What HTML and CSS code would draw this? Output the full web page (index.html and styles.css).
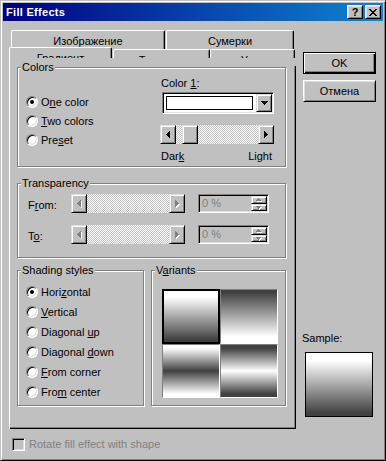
FILE: index.html
```html
<!DOCTYPE html>
<html lang="ru">
<head>
	<meta charset="UTF-8">
	<title>Fill Effects</title>
	<link rel="stylesheet" href="styles.css">
</head>
<body>
	<div class="window">
		<div class="titlebar">
			<span class="title">Fill Effects</span>
			<span class="tbtn raised">?</span>
			<span class="tbtn raised">
				<svg width="8" height="7"><path d="M0 0h2v1H0zM6 0h2v1H6zM1 1h2v1H1zM5 1h2v1H5zM2 2h4v1H2zM3 3h2v1H3zM2 4h4v1H2zM1 5h2v1H1zM5 5h2v1H5zM0 6h2v1H0zM6 6h2v1H6z"/></svg>
			</span>
		</div>
		<div class="client">
			<div class="main">
				<!-- вкладки -->
				<div class="tabs-back">
					<div class="tab t-img">Изображение</div>
					<div class="tab t-dusk">Сумерки</div>
				</div>
				<div class="tabs-front">
					<div class="tab t-grad sel">Градиент</div>
					<div class="tab t-tex">Текстура</div>
					<div class="tab t-pat">Узор</div>
				</div>
				<div class="panel">
					<div class="panel-body">
						<!-- Colors -->
						<div class="group g-colors">
							<span class="cap">Colors</span>
							<div class="colors-row">
								<div class="radios">
									<div class="radio"><span class="rb on"></span><span>O<u>n</u>e color</span></div>
									<div class="radio"><span class="rb"></span><span><u>T</u>wo colors</span></div>
									<div class="radio"><span class="rb"></span><span>Pre<u>s</u>et</span></div>
								</div>
								<div class="pick">
									<div class="lbl">Color <u>1</u>:</div>
									<div class="combo">
										<span class="swatch"></span>
										<span class="drop raised">
											<svg width="7" height="4"><path d="M0 0h7v1H0zM1 1h5v1H1zM2 2h3v1H2zM3 3h1v1H3z"/></svg>
										</span>
									</div>
									<div class="scroll">
										<span class="sbtn raised"><svg width="4" height="7"><path d="M0 3h1v1H0zM1 2h1v3H1zM2 1h1v5H2zM3 0h1v7H3z"/></svg></span>
										<span class="track"><span class="thumb raised"></span></span>
										<span class="sbtn raised"><svg width="4" height="7"><path d="M0 0h1v7H0zM1 1h1v5H1zM2 2h1v3H2zM3 3h1v1H3z"/></svg></span>
									</div>
									<div class="ends"><span>Dar<u>k</u></span><span>Light</span></div>
								</div>
							</div>
						</div>

						<!-- Transparency -->
						<div class="group g-trans">
							<span class="cap">Transparency</span>
							<div class="trow">
								<span class="tlabel">F<u>r</u>om:</span>
								<div class="scroll dis">
									<span class="sbtn raised"><svg width="5" height="8"><path fill="#fff" d="M1 4h1v1H1zM2 3h1v3H2zM3 2h1v5H3zM4 1h1v7H4z"/><path fill="#808080" d="M0 3h1v1H0zM1 2h1v3H1zM2 1h1v5H2zM3 0h1v7H3z"/></svg></span>
									<span class="track"></span>
									<span class="sbtn raised"><svg width="5" height="8"><path fill="#fff" d="M1 1h1v7H1zM2 2h1v5H2zM3 3h1v3H3zM4 4h1v1H4z"/><path fill="#808080" d="M0 0h1v7H0zM1 1h1v5H1zM2 2h1v3H2zM3 3h1v1H3z"/></svg></span>
								</div>
								<div class="spin">
									<span class="val">0 %</span>
									<span class="spbtns">
										<span class="spb raised"><svg width="6" height="4"><path fill="#fff" d="M3 1h1v1H3zM2 2h3v1H2zM1 3h5v1H1z"/><path fill="#808080" d="M2 0h1v1H2zM1 1h3v1H1zM0 2h5v1H0z"/></svg></span>
										<span class="spb raised"><svg width="6" height="4"><path fill="#fff" d="M1 1h5v1H1zM2 2h3v1H2zM3 3h1v1H3z"/><path fill="#808080" d="M0 0h5v1H0zM1 1h3v1H1zM2 2h1v1H2z"/></svg></span>
									</span>
								</div>
							</div>
							<div class="trow">
								<span class="tlabel">T<u>o</u>:</span>
								<div class="scroll dis">
									<span class="sbtn raised"><svg width="5" height="8"><path fill="#fff" d="M1 4h1v1H1zM2 3h1v3H2zM3 2h1v5H3zM4 1h1v7H4z"/><path fill="#808080" d="M0 3h1v1H0zM1 2h1v3H1zM2 1h1v5H2zM3 0h1v7H3z"/></svg></span>
									<span class="track"></span>
									<span class="sbtn raised"><svg width="5" height="8"><path fill="#fff" d="M1 1h1v7H1zM2 2h1v5H2zM3 3h1v3H3zM4 4h1v1H4z"/><path fill="#808080" d="M0 0h1v7H0zM1 1h1v5H1zM2 2h1v3H2zM3 3h1v1H3z"/></svg></span>
								</div>
								<div class="spin">
									<span class="val">0 %</span>
									<span class="spbtns">
										<span class="spb raised"><svg width="6" height="4"><path fill="#fff" d="M3 1h1v1H3zM2 2h3v1H2zM1 3h5v1H1z"/><path fill="#808080" d="M2 0h1v1H2zM1 1h3v1H1zM0 2h5v1H0z"/></svg></span>
										<span class="spb raised"><svg width="6" height="4"><path fill="#fff" d="M1 1h5v1H1zM2 2h3v1H2zM3 3h1v1H3z"/><path fill="#808080" d="M0 0h5v1H0zM1 1h3v1H1zM2 2h1v1H2z"/></svg></span>
									</span>
								</div>
							</div>
						</div>

						<div class="srow">
							<!-- Shading styles -->
							<div class="group g-shade">
								<span class="cap">Shading styles</span>
								<div class="radios">
									<div class="radio"><span class="rb on"></span><span>Hori<u>z</u>ontal</span></div>
									<div class="radio"><span class="rb"></span><span><u>V</u>ertical</span></div>
									<div class="radio"><span class="rb"></span><span>Diagonal <u>u</u>p</span></div>
									<div class="radio"><span class="rb"></span><span>Diagonal <u>d</u>own</span></div>
									<div class="radio"><span class="rb"></span><span><u>F</u>rom corner</span></div>
									<div class="radio"><span class="rb"></span><span>Fro<u>m</u> center</span></div>
								</div>
							</div>
							<!-- Variants -->
							<div class="group g-var">
								<span class="cap">V<u>a</u>riants</span>
								<div class="tiles">
									<span class="tile v1 sel"></span>
									<span class="tile v2"></span>
									<span class="tile v3"></span>
									<span class="tile v4"></span>
								</div>
							</div>
						</div>
					</div>
				</div>
				<div class="rotate">
					<span class="cb"></span>
					<span>Rotate fill effect with shape</span>
				</div>
			</div>

			<div class="side">
				<div class="btn def">OK</div>
				<div class="btn">Отмена</div>
				<div class="sample-lbl">Sample:</div>
				<div class="sample v1"></div>
			</div>
		</div>
	</div>
</body>
</html>
```

FILE: styles.css
```css
*{
	margin: 0;
	padding: 0;
	box-sizing: border-box;
}
body{
	font: 11px "Liberation Sans", Arial, sans-serif;
	color: #000;
	background: #c0c0c0;
}
u{
	text-decoration: underline;
	text-underline-offset: 1px;
}
.window{
	width: 386px;
	height: 461px;
	padding: 2px;
	background: #c0c0c0;
	border: 1px solid;
	border-color: #c0c0c0 #000 #000 #c0c0c0;
	box-shadow: inset 1px 1px #fff, inset -1px -1px #808080;
}

/* объёмные элементы */
.raised{
	background: #c0c0c0;
	border: 1px solid;
	border-color: #dfdfdf #000 #000 #dfdfdf;
	box-shadow: inset 1px 1px #fff, inset -1px -1px #808080;
}

/* заголовок */
.titlebar{
	display: flex;
	align-items: center;
	height: 18px;
	padding: 0 2px 0 3px;
	background: linear-gradient(to right, #000080, #1084d0);
}
.title{
	flex: 1;
	color: #fff;
	font-weight: bold;
	letter-spacing: 0.3px;
	line-height: 18px;
}
.tbtn{
	display: flex;
	align-items: center;
	justify-content: center;
	width: 16px;
	height: 14px;
	font-weight: bold;
	font-size: 11px;
	line-height: 12px;
	border-color: #fff #000 #000 #fff;
	box-shadow: inset 1px 1px #dfdfdf, inset -1px -1px #808080;
}
.tbtn + .tbtn{
	margin-left: 2px;
}

.client{
	display: flex;
}
.main{
	width: 287px;
	margin: 9px 0 0 6px;
}

/* вкладки */
.tabs-back{
	display: flex;
	height: 19px;
	margin-left: 2px;
}
.tab{
	height: 19px;
	padding-top: 4px;
	line-height: 13px;
	text-align: center;
	white-space: nowrap;
	border: 1px solid #fff;
	border-right-color: #000;
	border-bottom: 0;
	border-radius: 2px 2px 0 0;
	box-shadow: inset -1px 0 #808080;
}
.t-img{ width: 154px; }
.t-dusk{ width: 128px; margin-left: 1px; }
.tabs-front{
	display: flex;
	height: 11px;
	margin-top: -2px;
	overflow: hidden;
}
.tabs-front .tab{
	margin-top: 2px;
	background: #c0c0c0;
}
.tabs-front .tab.sel{
	margin-top: 0;
}
.t-grad{ width: 103px; }
.t-tex{ width: 97px; margin-left: 1px; }
.t-pat{ width: 85px; }

.panel{
	height: 371px;
	padding-top: 8px;
	border-left: 1px solid #fff;
}
.panel-body{
	height: 363px;
	padding: 1px 0 0 7px;
	border-right: 1px solid #000;
	border-bottom: 1px solid #000;
	box-shadow: inset -1px -1px #808080;
}

/* рамки групп */
.group{
	border: 1px solid #808080;
	box-shadow: 1px 1px #fff, inset 1px 1px #fff;
}
.cap{
	display: table;
	margin: -7px 0 0 3px;
	padding: 0 1px;
	line-height: 13px;
	background: #c0c0c0;
}
.g-colors{
	width: 269px;
	height: 100px;
}
.colors-row{
	display: flex;
}
.radios{
	width: 142px;
	padding: 18px 0 0 8px;
}
.radio{
	display: flex;
	align-items: center;
	height: 19px;
	white-space: nowrap;
}
.rb{
	display: flex;
	align-items: center;
	justify-content: center;
	flex-shrink: 0;
	width: 12px;
	height: 12px;
	margin-right: 3px;
	border-radius: 50%;
	background: #fff;
	border: 1px solid;
	border-color: #808080 #fff #fff #808080;
	box-shadow: inset 1px 1px #000, inset -1px -1px #dfdfdf;
}
.rb.on::after{
	content: "";
	width: 4px;
	height: 4px;
	border-radius: 50%;
	background: #000;
}
.pick{
	width: 114px;
	padding-top: 3px;
}
.lbl{
	padding-left: 1px;
	line-height: 13px;
}
.combo{
	display: flex;
	width: 112px;
	height: 22px;
	margin: 2px 0 0 2px;
	padding: 1px;
	background: #fff;
	border: 1px solid;
	border-color: #808080 #fff #fff #808080;
	box-shadow: inset 1px 1px #000, inset -1px -1px #dfdfdf;
}
.swatch{
	flex: 1;
	margin: 2px 3px 2px 2px;
	border: 1px solid #000;
	background: #fff;
}
.drop{
	display: flex;
	align-items: center;
	justify-content: center;
	width: 16px;
}

/* полосы прокрутки */
.scroll{
	display: flex;
	width: 114px;
	height: 19px;
	margin-top: 11px;
}
.sbtn{
	display: flex;
	align-items: center;
	justify-content: center;
	flex-shrink: 0;
	width: 16px;
}
.track{
	display: flex;
	flex: 1;
	background: repeating-conic-gradient(#c0c0c0 0 25%, #fff 0 50%) 0 0 / 2px 2px;
}
.thumb{
	width: 16px;
	margin-left: 6px;
}
.ends{
	display: flex;
	justify-content: space-between;
	margin-top: 6px;
	padding: 0 2px 0 1px;
	line-height: 13px;
}

/* прозрачность */
.g-trans{
	width: 269px;
	height: 75px;
	margin-top: 16px;
}
.trow{
	display: flex;
	height: 19px;
	margin-top: 12px;
	padding-left: 10px;
}
.trow:first-of-type{
	margin-top: 4px;
}
.tlabel{
	width: 43px;
	padding-top: 5px;
	line-height: 13px;
}
.scroll.dis{
	margin-top: 0;
}
.spin{
	display: flex;
	width: 71px;
	height: 19px;
	margin-left: 13px;
	padding: 1px;
	background: #c0c0c0;
	border: 1px solid;
	border-color: #808080 #fff #fff #808080;
	box-shadow: inset 1px 1px #000, inset -1px -1px #dfdfdf;
}
.val{
	flex: 1;
	padding: 1px 0 0 2px;
	line-height: 13px;
	color: #808080;
}
.spbtns{
	display: flex;
	flex-direction: column;
	width: 16px;
}
.spb{
	display: flex;
	align-items: center;
	justify-content: center;
	height: 8px;
}
.spb + .spb{
	height: 7px;
}

/* стили и варианты */
.srow{
	display: flex;
	gap: 7px;
	margin-top: 12px;
}
.g-shade{
	width: 127px;
	height: 136px;
}
.g-shade .radios{
	width: auto;
	padding-top: 5px;
}
.g-shade .radio{
	height: 20px;
}
.g-var{
	width: 135px;
	height: 136px;
}
.tiles{
	display: grid;
	grid-template-columns: 58px 58px;
	grid-template-rows: 55px 54px;
	margin: 12px 0 0 10px;
}
.tile{
	border: 1px solid;
	border-color: #808080 #fff #fff #808080;
}
.tile.sel{
	border: 2px solid #000;
}
.v1{ background: linear-gradient(#fff 12%, #404040 96%); }
.v2{ background: linear-gradient(#404040 4%, #fff 88%); }
.v3{ background: linear-gradient(#fff 6%, #404040 50%, #fff 94%); }
.v4{ background: linear-gradient(#404040 6%, #fff 50%, #404040 94%); }

.rotate{
	display: flex;
	align-items: center;
	height: 13px;
	margin: 9px 0 0 3px;
	line-height: 13px;
	color: #808080;
}
.cb{
	width: 13px;
	height: 13px;
	margin-right: 4px;
	background: #c0c0c0;
	border: 1px solid;
	border-color: #808080 #fff #fff #808080;
	box-shadow: inset 1px 1px #000, inset -1px -1px #dfdfdf;
}

/* правая колонка */
.side{
	width: 73px;
	margin-left: 7px;
	padding-top: 31px;
}
.btn{
	height: 22px;
	line-height: 20px;
	text-align: center;
	background: #c0c0c0;
	border: 1px solid;
	border-color: #fff #000 #000 #fff;
	box-shadow: inset 1px 1px #dfdfdf, inset -1px -1px #808080;
}
.btn.def{
	border-color: #000;
	box-shadow: inset 1px 1px #fff, inset -1px -1px #000, inset -2px -2px #808080;
}
.btn + .btn{
	margin-top: 6px;
}
.sample-lbl{
	margin: 230px 0 0 -1px;
	line-height: 13px;
}
.sample{
	width: 68px;
	height: 65px;
	margin: 7px 0 0 2px;
	border: 1px solid #000;
}
```
